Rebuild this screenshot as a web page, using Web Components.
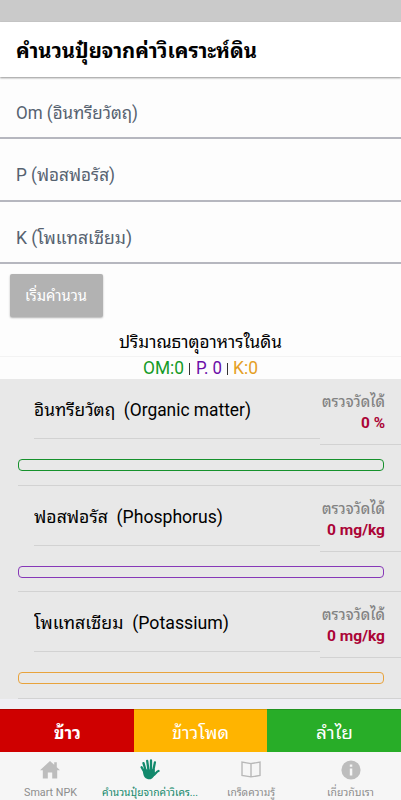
<!DOCTYPE html>
<html lang="th">
<head>
<meta charset="utf-8">
<title>Smart NPK</title>
<style>
html,body{margin:0;padding:0}
body{width:401px;height:800px;overflow:hidden;background:#fdfdfd;font-family:Roboto,"Noto Sans Thai Looped","Noto Looped Thai","Droid Sans Thai",Loma,Garuda,Waree,"Noto Sans Thai","Noto Sans",sans-serif}
</style>
</head>
<body>
<npk-app></npk-app>
<script>
const define = (name, html, setup) => {
  const t = document.createElement('template');
  t.innerHTML = html;
  customElements.define(name, class extends HTMLElement {
    connectedCallback() {
      if (this.shadowRoot) return;
      this.attachShadow({mode: 'open'}).append(t.content.cloneNode(true));
      if (setup) setup(this, this.shadowRoot);
    }
  });
};

/* One-line label condensed or widened to the width given in its "w" attribute. */
define('fit-text', `<style>
:host{display:block;white-space:nowrap;flex:none}
span{display:inline-block;transform-origin:0 50%;white-space:pre}
</style><span></span>`, (el, root) => {
  const s = root.querySelector('span');
  s.textContent = el.getAttribute('t');
  const w = +el.getAttribute('w');
  el.style.width = w + 'px';
  s.style.transform = `scaleX(${w / s.getBoundingClientRect().width})`;
});

define('page-header', `<style>
:host{display:flex;align-items:center;box-sizing:border-box;height:55px;padding:2px 16px 0 15.5px;background:#fff;box-shadow:0 1px 2px rgba(0,0,0,.42);font-size:20px;font-weight:700;line-height:30px;color:#000;position:relative}
</style><slot></slot>`);

define('nutrient-field', `<style>
:host{display:flex;align-items:center;box-sizing:border-box;height:62.3px;padding:12px 16px 0;border-bottom:2px solid #b6b7bf;font-size:17.5px;line-height:26px;color:#566270}
</style><slot></slot>`);

define('action-button', `<style>
:host{display:flex;align-items:center;box-sizing:border-box;width:93px;height:43px;padding:2px 0 0 15px;margin:10px 0 0 10px;border-radius:2px;background:#b2b2b2;color:#fff;font-size:15px;line-height:24px;box-shadow:0 1px 2px rgba(0,0,0,.3)}
</style><slot></slot>`);

define('soil-summary', `<style>
:host{display:block;height:62px;color:#000}
.h{display:flex;align-items:center;justify-content:center;height:28px;padding-top:11px;border-bottom:1px solid #f3f3f3;font-size:17.5px;line-height:26px}
.v{display:flex;align-items:center;height:22px;padding-left:143px;font-size:18px;line-height:22px}
i{flex:none;width:1px;height:12px;background:#333;margin:3px 6px 0 5px}
i+fit-text+i{margin-right:5px}
</style><div class="h"><fit-text t="ปริมาณธาตุอาหารในดิน" w="163"></fit-text></div>
<div class="v"><fit-text t="OM:0" w="41" style="color:#149b27"></fit-text><i></i><fit-text t="P. 0" w="26" style="color:#6b0ea8"></fit-text><i></i><fit-text t="K:0" w="25" style="color:#e5a025"></fit-text></div>`);

define('nutrient-row', `<style>
:host{display:block;height:106.5px;color:#000}
.top{display:flex;height:66px;padding-left:34px}
.name{box-sizing:border-box;width:286px;height:60px;padding-top:18px;border-bottom:1px solid #d2d2d2;font-size:17.5px;line-height:26px}
.val{box-sizing:border-box;flex:1;height:66px;padding:13px 16.5px 0 0;border-bottom:1px solid #d2d2d2;display:flex;flex-direction:column;align-items:flex-end;font-size:15.5px;line-height:21px;font-weight:700}
.val fit-text:first-of-type{color:#828282;font-weight:500}
.val fit-text:last-of-type{color:#ab0436}
.bar{box-sizing:border-box;width:366.5px;height:12px;margin:14px 0 0 17.5px;border:1.5px solid var(--bar);border-radius:4px}
.end{height:13.5px;margin-left:17.5px;border-bottom:1px solid #d2d2d2}
</style><div class="top"><div class="name"></div><div class="val"><fit-text t="ตรวจวัดได้" w="63"></fit-text></div></div><div class="bar"></div><div class="end"></div>`, (el, root) => {
  const add = (sel, t, w) => {
    const n = document.createElement('fit-text');
    n.setAttribute('t', t);
    n.setAttribute('w', w);
    root.querySelector(sel).append(n);
  };
  add('.name', el.getAttribute('name'), el.getAttribute('nw'));
  add('.val', el.getAttribute('value'), el.getAttribute('vw'));
});

define('crop-button', `<style>
:host{display:flex;align-items:center;justify-content:center;box-sizing:border-box;height:43px;padding-top:5px;color:#fff;font-size:17.5px;line-height:26px;border-top:1px solid rgba(0,0,0,.15)}
</style><slot></slot>`);

define('tab-item', `<style>
:host{display:flex;flex-direction:column;align-items:center;color:#8d8d8d;fill:#bdbdbd;font-size:11px;line-height:16px}
.i{height:24px;margin:6px 0 3px;display:flex;align-items:center}
</style><div class="i"><slot name="icon"></slot></div><slot></slot>`);

define('npk-app', `<style>
:host{display:flex;flex-direction:column;width:401px;height:800px;background:#fdfdfd}
.status{height:22px;background:#cacaca}
.list{display:block;box-sizing:border-box;height:320px;padding-top:.4px;background:#e8e8e8}
.gap{height:10px;background:#efeff4}
.crops{display:grid;grid-template-columns:134px 133px 134px}
.tabs{display:grid;grid-template-columns:repeat(4,1fr);height:48px;background:#f6f6f6}
svg{display:block}
</style>
<div class="status"></div>
<page-header><fit-text t="คำนวนปุ๋ยจากค่าวิเคราะห์ดิน" w="241"></fit-text></page-header>
<nutrient-field><fit-text t="Om (อินทรียวัตฤ)" w="122"></fit-text></nutrient-field>
<nutrient-field><fit-text t="P (ฟอสฟอรัส)" w="99"></fit-text></nutrient-field>
<nutrient-field><fit-text t="K (โพแทสเซียม)" w="116"></fit-text></nutrient-field>
<action-button><fit-text t="เริ่มคำนวน" w="62"></fit-text></action-button>
<soil-summary></soil-summary>
<div class="list">
<nutrient-row name="อินทรียวัตฤ  (Organic matter)" nw="217" value="0 %" vw="24" style="--bar:#16912c"></nutrient-row>
<nutrient-row name="ฟอสฟอรัส  (Phosphorus)" nw="189" value="0 mg/kg" vw="58" style="--bar:#8738b8"></nutrient-row>
<nutrient-row name="โพแทสเซียม  (Potassium)" nw="195" value="0 mg/kg" vw="58" style="--bar:#e8a33c"></nutrient-row>
</div>
<div class="gap"></div>
<div class="crops">
<crop-button style="background:#cf0000;font-weight:700"><fit-text t="ข้าว" w="27"></fit-text></crop-button>
<crop-button style="background:#ffb400"><fit-text t="ข้าวโพด" w="57"></fit-text></crop-button>
<crop-button style="background:#28ad28"><fit-text t="ลำไย" w="37"></fit-text></crop-button>
</div>
<div class="tabs">
<tab-item><svg slot="icon" width="20" height="18" viewBox="0 0 20 18"><path d="M10 0 0 9.2h2.8V17.5h5v-6h4.4v6h5V9.2H20L16.8 6.2V1.2h-2.6v2.6z"/></svg><fit-text t="Smart NPK" w="53"></fit-text></tab-item>
<tab-item style="color:#12896c;fill:#12896c"><svg slot="icon" width="20" height="21" viewBox="0 0 20 21"><g fill="none" stroke="#12896c" stroke-width="2.3" stroke-linecap="round"><path d="M5.8 12 3.5 4.2M8.3 10 7.2 1.8M11 10V1.4M13.4 11l1.5-7.6M4.6 13.5 1.6 8.2"/><path d="M13 16.5c2.6-1 3.2-4 5.5-4.5"/></g><path d="M4.3 10.5 14.6 10l.4 4c-1 3.8-2.6 6.3-5.4 6.3-4.2 0-6.1-2.4-6.6-7.3z"/></svg><fit-text t="คำนวนปุ๋ยจากค่าวิเคร..." w="96"></fit-text></tab-item>
<tab-item><svg slot="icon" width="20" height="17" viewBox="0 0 20 17"><path fill="none" stroke="#b8b8b8" stroke-width="1.4" d="M10 2.6 1 1.1v13.4l9 1.4 9-1.4V1.1l-9 1.5v13"/></svg><fit-text t="เกร็ดความรู้" w="48"></fit-text></tab-item>
<tab-item><svg slot="icon" width="20" height="20" viewBox="0 0 20 20"><circle cx="10" cy="10" r="9.6"/><path fill="#f6f6f6" d="M8.8 4.4h2.5v2.4H8.8zM8.8 8.4h2.5v7H8.8z"/></svg><fit-text t="เกี่ยวกับเรา" w="47"></fit-text></tab-item>
</div>`);
</script>
</body>
</html>
